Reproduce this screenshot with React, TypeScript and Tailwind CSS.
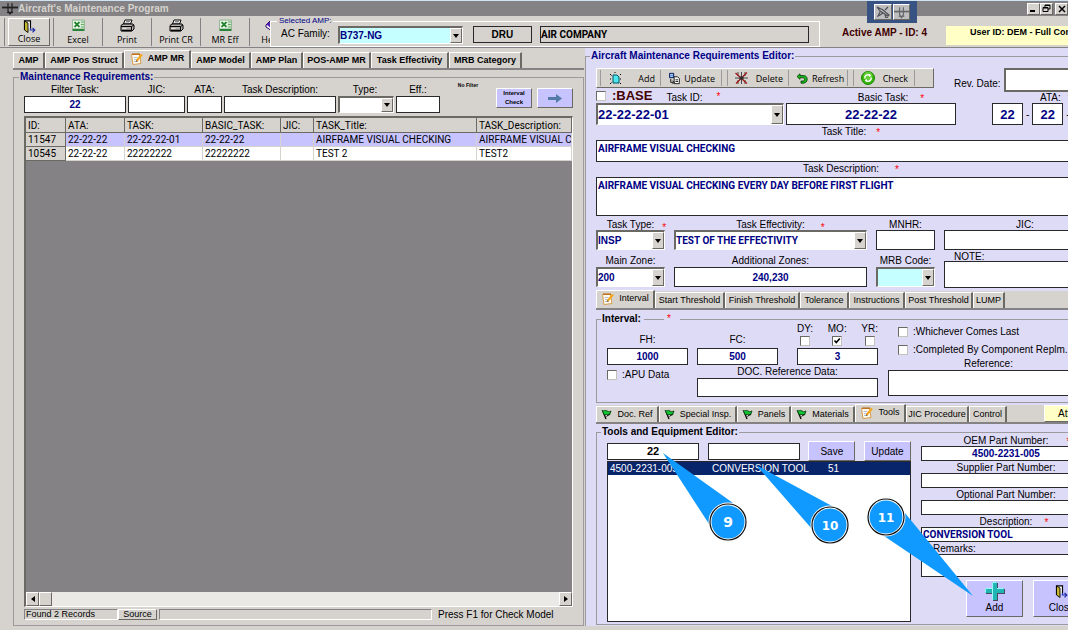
import { useState, type ReactNode } from 'react';
import clsx from 'clsx';

const raised = 'border border-t-white border-l-white border-b-[#6b6964] border-r-[#6b6964]';
const sunken = 'border border-t-[#848284] border-l-[#848284] border-b-white border-r-white';

/* ---------- Icons ---------- */

function DoorIcon() {
  return (
    <svg className="h-[13px] w-[13px]" viewBox="0 0 13 13">
      <path d="M1.500 10V.8h6V8" fill="#fff" stroke="#000" strokeWidth="1.200" />
      <path d="M1.500 1 5 3v9.500L1.500 10z" fill="#c6b531" stroke="#000" strokeWidth=".9" />
      <path d="M7.500 8v2H11M9.500 8l2.300 2-2.300 2.300" fill="none" stroke="#2131a5" strokeWidth="1.200" />
    </svg>
  );
}

function ExcelIcon() {
  return (
    <svg className="h-[13px] w-[13px]" viewBox="0 0 13 13">
      <path d="M.500 1h12v9H.500z" fill="#cfe8cf" stroke="#8cad8c" strokeWidth=".8" />
      <path d="M8.500 3H12M8.500 5.500H12M8.500 8H12" stroke="#6bad6b" />
      <path d="M1.500 2h7v7h-7z" fill="#fff" />
      <path d="M2.500 3l5 5M7.500 3l-5 5" stroke="#218429" strokeWidth="1.800" />
      <path d="M.500 10h12v2H.500z" fill="#29843a" />
    </svg>
  );
}

function PrinterIcon() {
  return (
    <svg className="h-[13px] w-[15px]" viewBox="0 0 15 13">
      <path d="M5 1h7l-1.500 4h-7z" fill="#fff" stroke="#000" />
      <path d="M6 2.500h4M5.500 4h4" stroke="#555" strokeWidth=".7" />
      <path d="M1 6.500 3 5h10l1 1.500V10l-2 2H1z" fill="#b5b2ad" stroke="#000" />
      <path d="M1 7.500h10.500v4M11.500 7.500 14 6" fill="none" stroke="#000" />
      <path d="M2.500 9.500h4" stroke="#e7e3de" />
      <path d="M2 11.500h9.500" stroke="#000" strokeWidth="1.500" />
    </svg>
  );
}

function BookIcon() {
  return (
    <svg className="h-[13px] w-[13px]" viewBox="0 0 13 13">
      <path d="M1 6 6 1l6 4-5 6z" fill="#5a21b5" stroke="#210063" />
      <path d="M1 6v2l6 4 5-6" fill="#fff" stroke="#210063" />
      <path d="M1.500 5.500 6 1.500l3 2-4 5z" fill="#5a21b5" />
      <path d="M5 4h2v2" stroke="#ffe000" fill="none" />
    </svg>
  );
}

function NoteIcon() {
  return (
    <svg className="h-[13px] w-[13px] flex-none" viewBox="0 0 13 13">
      <path d="M1.500 2.500h8l1.500 9-8 1z" fill="#fffaf0" stroke="#d69c4a" />
      <path d="M2 2.200h8" stroke="#bd7321" strokeWidth="1.600" />
      <path d="M3.500 5.500h4M4 7.500h3M4 9.500h4" stroke="#94a5c6" strokeWidth=".7" />
      <path d="M12 2.500 6.500 9" stroke="#f7a518" strokeWidth="2" />
      <path d="M6.800 8.200 5.500 10l2-.8z" fill="#424242" />
    </svg>
  );
}

function FlagIcon() {
  return (
    <svg className="h-[11px] w-[11px] flex-none" viewBox="0 0 11 11">
      <path d="M2 2.500 5 10" stroke="#000" strokeWidth="1.300" />
      <path d="M1 1.500c2 1 3-1 5 .5s3 0 4 0L8.500 6C7 6.500 6 4.500 3.500 6z" fill="#10c631" stroke="#003108" strokeWidth=".8" />
      <path d="M5.500 7.500 8.500 5" stroke="#000" />
    </svg>
  );
}

function NewIcon() {
  return (
    <svg className="h-[13px] w-[13px]" viewBox="0 0 13 13">
      <path d="M4 3h4l2 2v6H4z" fill="#4ae7ef" stroke="#005263" />
      <path d="M1 2l1.500 1.500M1 12l1.500-1.500M12 2l-1 1M12 12l-1-1M1 7h1M12 7h-1M6 1V0" stroke="#000" />
    </svg>
  );
}

function UpdateIcon() {
  return (
    <svg className="h-[13px] w-[13px]" viewBox="0 0 13 13">
      <path d="M.500.500h5v5h-5z" fill="#4284d6" stroke="#001052" />
      <path d="M1.500 2h3M1.500 4h3" stroke="#fff" strokeWidth=".8" />
      <path d="M6 4.500h4l2 2v6H6z" fill="#fff" stroke="#000" />
      <path d="M7.500 8h3M7.500 10h3M2 7v4h3M4 9l2 2-2 2" fill="none" stroke="#000" />
    </svg>
  );
}

function DeleteIcon() {
  return (
    <svg className="h-[14px] w-[15px]" viewBox="0 0 15 14">
      <path d="M7.500 1v12M4 1v4M11 1v4M4 9v4M11 9v4M1 7h13" stroke="#39393c" strokeWidth=".9" />
      <path d="M1.500 2 13 12.500M13 1.500 2 12.500" stroke="#a51818" strokeWidth="1.300" />
      <path d="M5.500 5.500h4v3h-4z" fill="#303030" />
    </svg>
  );
}

function RefreshIcon() {
  return (
    <svg className="h-[11px] w-[12px]" viewBox="0 0 12 11">
      <path d="M1 3.500 4 .8v1.700h3.500c5 0 5 7.700-.5 7.700H5V8h2c2 0 2-3.200 0-3.200H4v1.500z" fill="#18b518" stroke="#003900" strokeWidth=".8" />
    </svg>
  );
}

function CheckIcon() {
  return (
    <svg className="h-[14px] w-[14px]" viewBox="0 0 14 14">
      <circle cx="7" cy="7" r="6.500" fill="#39b510" stroke="#188400" />
      <circle cx="7" cy="5" r="4.500" fill="#84de52" opacity=".6" />
      <path d="M3.800 7.500a3.200 3.200 0 0 1 5.200-3M10.200 6.500a3.200 3.200 0 0 1-5.200 3" fill="none" stroke="#fff" strokeWidth="1.400" />
      <path d="M8 2.800l2.300 2L8 6zM6 11.200l-2.300-2L6 8z" fill="#fff" />
    </svg>
  );
}

function PlusIcon() {
  return (
    <svg className="h-[20px] w-[20px]" viewBox="0 0 20 20">
      <path d="M8 2h5v6h7v5h-7v7H8v-7H1V8h7z" fill="#4a4a5a" />
      <path d="M7 1h5v6h7v5h-7v7H7v-7H0V7h7z" fill="#21b5b5" />
      <path d="M7.500 19V1.500h4M.500 11.500v-4h7M12 7.500h6.500" fill="none" stroke="#9cf7f7" />
    </svg>
  );
}

function PlaneIcon({ className }: { className?: string }) {
  return (
    <svg className={className} viewBox="0 0 16 13" fill="none" stroke="currentColor">
      <path d="M6 1v8l2 3 2-3V1" strokeWidth="1.200" />
      <path d="M0 5.500h16" strokeWidth="1.800" />
      <path d="M5 10.500h6" strokeWidth="1.200" />
    </svg>
  );
}

/* ---------- Controls ---------- */

function Star({ className = 'ml-2' }: { className?: string }) {
  return <span className={clsx('absolute left-full top-0 text-[#ff0000]', className)}>*</span>;
}

interface FieldProps {
  label: string;
  star?: string;
  value?: string;
  className?: string;
  labelClass?: string;
  inputClass?: string;
  multiline?: boolean;
}

function Field({ label, star, value = '', className, labelClass = 'h-[13px] text-center', inputClass, multiline }: FieldProps) {
  const box = clsx('w-full min-w-0 resize-none border border-[#29292c] bg-white px-px font-bold text-[#000084] outline-none', inputClass);
  return (
    <label className={clsx('flex min-w-0 flex-col', className)}>
      <span className={clsx('whitespace-nowrap leading-[13px]', labelClass)}>
        <span className="relative">
          {label}
          {star && <Star className={star} />}
        </span>
      </span>
      {multiline ? <textarea className={box} defaultValue={value} /> : <input className={box} defaultValue={value} />}
    </label>
  );
}

interface ComboProps {
  value?: string;
  className?: string;
  label: string;
}

function Combo({ value = '', className, label }: ComboProps) {
  return (
    <span className={clsx('relative block border-2 border-b border-r border-t-[#6b6964] border-l-[#6b6964] border-b-white border-r-white bg-white', className)}>
      <select aria-label={label} className="block h-full w-full appearance-none bg-transparent font-bold text-[#000084] outline-none">
        <option>{value}</option>
      </select>
      <span className={clsx('pointer-events-none absolute inset-y-0 right-0 flex w-3 items-center justify-center bg-[#d6d3ce]', raised)}>
        <svg className="h-[4px] w-[6px]" viewBox="0 0 6 4">
          <path d="M0 0h6L3 4z" />
        </svg>
      </span>
    </span>
  );
}

function CheckBox({ label, checked = false, hideLabel = false }: { label: string; checked?: boolean; hideLabel?: boolean }) {
  const [on, setOn] = useState(checked);
  return (
    <label className="flex items-center gap-[5px] whitespace-nowrap">
      <span className="relative block h-[10px] w-[10px]">
        <input
          type="checkbox"
          aria-label={label}
          checked={on}
          onChange={() => setOn(!on)}
          className="block h-[10px] w-[10px] appearance-none border border-t-[#6b6964] border-l-[#6b6964] border-b-[#c6c3bd] border-r-[#c6c3bd] bg-white"
        />
        {on && (
          <svg className="pointer-events-none absolute inset-0" viewBox="0 0 10 10">
            <path d="M2.500 4.500 4.300 6.500l3.500-4" fill="none" stroke="#000" strokeWidth="1.600" />
          </svg>
        )}
      </span>
      {!hideLabel && <span>{label}</span>}
    </label>
  );
}

interface TabItem {
  label: string;
  icon?: ReactNode;
  width: string;
}

function Tabs({ items, active, bold, children }: { items: TabItem[]; active: string; bold?: boolean; children?: ReactNode }) {
  const [current, setCurrent] = useState(active);
  return (
    <div className={clsx('flex h-[19px] items-end border-b-2 border-b-[#848284] bg-[#d6d3ce] text-[9px]', bold && 'font-bold')}>
      {items.map((tab) => (
        <button
          key={tab.label}
          onClick={() => setCurrent(tab.label)}
          className={clsx(
            'flex flex-none items-center justify-center gap-[5px] whitespace-nowrap border-t border-l border-r-2 border-t-white border-l-white border-r-[#6b6964] leading-[13px]',
            tab.width,
            current === tab.label ? 'h-[18px] pb-[3px]' : 'h-4'
          )}
        >
          {tab.icon}
          {tab.label}
        </button>
      ))}
      {children}
    </div>
  );
}

interface ToolButtonProps {
  icon: ReactNode;
  label: string;
  className?: string;
}

function ToolButton({ icon, label, className = 'w-[49px] border-l border-[#848284]' }: ToolButtonProps) {
  return (
    <button className={clsx('flex h-7 flex-none flex-col items-center justify-between pt-px font-["Open_Sans",sans-serif] text-[9px] leading-[12px]', className)}>
      {icon}
      {label}
    </button>
  );
}

/* ---------- Data ---------- */

const mainTabs: TabItem[] = [
  { label: 'AMP', width: 'w-[32px]' },
  { label: 'AMP Pos Struct', width: 'w-[79px]' },
  { label: 'AMP MR', width: 'w-[67px]', icon: <NoteIcon /> },
  { label: 'AMP Model', width: 'w-[60px]' },
  { label: 'AMP Plan', width: 'w-[52px]' },
  { label: 'POS-AMP MR', width: 'w-[68px]' },
  { label: 'Task Effectivity', width: 'w-[78px]' },
  { label: 'MRB Category', width: 'w-[73px]' },
];

const thresholdTabs: TabItem[] = [
  { label: 'Interval', width: 'w-[59px]', icon: <NoteIcon /> },
  { label: 'Start Threshold', width: 'w-[70px]' },
  { label: 'Finish Threshold', width: 'w-[75px]' },
  { label: 'Tolerance', width: 'w-[49px]' },
  { label: 'Instructions', width: 'w-[56px]' },
  { label: 'Post Threshold', width: 'w-[68px]' },
  { label: 'LUMP', width: 'w-[32px]' },
];

const resourceTabs: TabItem[] = [
  { label: 'Doc. Ref', width: 'w-[63px]', icon: <FlagIcon /> },
  { label: 'Special Insp.', width: 'w-[78px]', icon: <FlagIcon /> },
  { label: 'Panels', width: 'w-[54px]', icon: <FlagIcon /> },
  { label: 'Materials', width: 'w-[64px]', icon: <FlagIcon /> },
  { label: 'Tools', width: 'w-[51px]', icon: <NoteIcon /> },
  { label: 'JIC Procedure', width: 'w-[63px]' },
  { label: 'Control', width: 'w-[38px]' },
];

const columns = [
  { name: 'ID:', width: 'w-[40px]' },
  { name: 'ATA:', width: 'w-[59px]' },
  { name: 'TASK:', width: 'w-[78px]' },
  { name: 'BASIC_TASK:', width: 'w-[78px]' },
  { name: 'JIC:', width: 'w-[33px]' },
  { name: 'TASK_Title:', width: 'w-[163px]' },
  { name: 'TASK_Description:', width: '' },
];

const requirements = [
  ['11547', '22-22-22', '22-22-22-01', '22-22-22', '', 'AIRFRAME VISUAL CHECKING', 'AIRFRAME VISUAL CHECKING'],
  ['10545', '22-22-22', '22222222', '22222222', '', 'TEST 2', 'TEST2'],
];

const callouts = [
  { n: 9, x: 728, y: 522, wedge: '663,453 733,503 709,524' },
  { n: 10, x: 830, y: 525, wedge: '756,465 832,506 812,529' },
  { n: 11, x: 886, y: 517, wedge: '973,596 905,513 884,536' },
];

/* ---------- Sections ---------- */

function Header() {
  return (
    <header className="relative flex-none border-t border-[#cfe3f3]">
      <div className="flex h-[15px] items-center justify-between bg-[#848284] pl-[2px]">
        <h1 className="flex items-center text-[10px] font-bold leading-[14px] text-[#d6d3ce]">
          <PlaneIcon className="h-[13px] w-4 text-[#212121]" />
          Aircraft&apos;s Maintenance Program
        </h1>
        <div className="flex">
          <button aria-label="Minimize" className={clsx('flex h-3 w-[13px] items-end bg-[#d6d3ce] p-[2px]', raised)}>
            <span className="h-[2px] w-[5px] bg-black" />
          </button>
          <button aria-label="Restore" className={clsx('mr-[2px] flex h-3 w-[13px] items-center justify-center bg-[#d6d3ce]', raised)}>
            <svg className="h-[9px] w-[9px]" viewBox="0 0 9 9" fill="none" stroke="#000">
              <path d="M3 3V1h5v4H6M3 1.500h5M1 3.500h5v4H1zM1 4h5" />
            </svg>
          </button>
          <button aria-label="Close window" className={clsx('flex h-3 w-[13px] items-center justify-center bg-[#d6d3ce]', raised)}>
            <svg className="h-[8px] w-[8px]" viewBox="0 0 8 8" stroke="#000" strokeWidth="1.500">
              <path d="M1 1l6 6M7 1 1 7" />
            </svg>
          </button>
        </div>
      </div>
      <div className="flex h-8 border-b border-[#848284]">
        <nav className="flex w-[270px] flex-none items-center overflow-hidden pl-1">
          <span className="mr-[3px] h-7 w-px flex-none bg-[#848284]" />
          <ToolButton icon={<DoorIcon />} label="Close" className={clsx('mr-[3px] w-[42px]', raised)} />
          <ToolButton icon={<ExcelIcon />} label="Excel" />
          <ToolButton icon={<PrinterIcon />} label="Print" />
          <ToolButton icon={<PrinterIcon />} label="Print CR" />
          <ToolButton icon={<ExcelIcon />} label="MR Eff" />
          <ToolButton icon={<BookIcon />} label="Help" className="w-[43px] border-l border-[#848284]" />
        </nav>
        <fieldset className="flex h-[31px] w-[550px] flex-none items-start gap-2 border border-white px-[10px]">
          <legend className="-ml-1 px-[2px] text-[8px] leading-[10px] text-[#000084]">Selected AMP:</legend>
          <span className="pt-px">AC Family:</span>
          <Combo label="AC Family" value="B737-NG" className="h-[18px] w-[125px] bg-[#c6ffff]!" />
          <input aria-label="Family code" defaultValue="DRU" className="ml-[2px] h-[17px] w-[59px] border border-[#29292c] text-center text-[10px] font-bold" />
          <input aria-label="Company" defaultValue="AIR COMPANY" className="h-[17px] min-w-0 flex-1 border border-[#29292c] text-[10px] font-bold font-['Roboto',sans-serif]" />
        </fieldset>
        <p className="w-[126px] flex-none pl-[22px] pt-[10px] font-bold text-[#420000]">Active AMP - ID: 4</p>
        <p className="mt-[10px] h-[19px] flex-1 overflow-hidden whitespace-nowrap bg-[#ffffc6] pl-6 text-[9px] font-bold leading-[13px]">User ID: DEM - Full Control</p>
      </div>
      <div className="absolute left-[867px] top-0 flex h-[22px] w-[50px] gap-px bg-[#395284] px-[7px] py-[3px]">
        <button aria-label="Aircraft list" className={clsx('flex flex-1 items-center justify-center bg-[#bdbebd]', raised)}>
          <svg className="h-3 w-[14px]" viewBox="0 0 14 12" fill="none" stroke="#4a4a52" strokeWidth="1.100">
            <path d="M1 1l3 4 8 5 1-1-6-5zM9 4l3-3M4 6 2 10l2-1 3-2M9 9l1 3 2-1" />
          </svg>
        </button>
        <button aria-label="Aircraft" className={clsx('flex flex-1 items-center justify-center bg-[#bdbebd]', raised)}>
          <PlaneIcon className="h-[13px] w-[15px] text-[#63656b]" />
        </button>
      </div>
    </header>
  );
}

function RequirementsPanel() {
  return (
    <section className="flex w-[585px] flex-none flex-col pl-[13px] pr-px pt-[3px]">
      <Tabs items={mainTabs} active="AMP MR" bold />
      <fieldset className="mt-px flex min-w-0 flex-1 flex-col border border-[#9c9a9c] px-[10px] pb-[5px]">
        <legend className="ml-[-5px] px-px text-[10px] font-bold leading-[12px] text-[#000084]">Maintenance Requirements:</legend>
        <div className="flex h-[33px] flex-none items-start">
          <div className="flex gap-[2px]">
            <Field label="Filter Task:" value="22" className="w-[102px]" inputClass="h-[17px] text-center text-[10px]" />
            <Field label="JIC:" className="w-[57px]" inputClass="h-[17px]" />
            <Field label="ATA:" className="w-[35px]" inputClass="h-[17px]" />
            <Field label="Task Description:" className="w-[112px]" inputClass="h-[17px]" />
            <div className="w-[56px]">
              <span className="block pr-[2px] text-center leading-[13px]">Type:</span>
              <Combo label="Type" className="h-[17px]" />
            </div>
            <Field label="Eff.:" className="w-[44px]" inputClass="h-[17px]" />
          </div>
          <span className="w-[56px] text-center text-[5px] font-bold leading-none">No Filter</span>
          <div className="flex flex-1 justify-between pt-[5px]">
            <button className={clsx('h-5 w-9 overflow-hidden bg-[#c6c3ff] text-[6px] font-bold leading-[9px]', raised)}>Interval Check</button>
            <button aria-label="Next" className={clsx('flex h-5 w-9 items-center justify-center bg-[#c6c3ff]', raised)}>
              <svg className="h-[9px] w-[14px]" viewBox="0 0 14 9">
                <path d="M0 3h8V0l6 4.500L8 9V6H0z" fill="#527ba5" />
              </svg>
            </button>
          </div>
        </div>
        <div className="flex flex-1 flex-col border-2 border-b border-r border-t-[#6b6964] border-l-[#6b6964] border-b-white border-r-white bg-[#848284]">
          <table className="w-full table-fixed border-separate border-spacing-0 bg-white font-['Roboto',sans-serif] text-[10px] leading-[13px]">
            <thead>
              <tr>
                {columns.map((column) => (
                  <th
                    key={column.name}
                    className={clsx('h-[15px] overflow-hidden whitespace-nowrap border-b border-r border-[#6b6964] bg-[#d6d3ce] px-[2px] py-0 text-left font-normal', column.width)}
                  >
                    {column.name}
                  </th>
                ))}
              </tr>
            </thead>
            <tbody>
              {requirements.map((row, rowIndex) => (
                <tr key={row[0]} className={rowIndex === 0 ? 'bg-[#c6c3ff]' : 'bg-white'}>
                  {row.map((cell, index) => (
                    <td
                      key={index}
                      className={clsx(
                        'overflow-hidden whitespace-nowrap border-b border-r px-[2px] py-0',
                        index === 0 ? 'border-[#6b6964] bg-[#d6d3ce]' : 'border-[#d6d3ce]'
                      )}
                    >
                      {cell}
                    </td>
                  ))}
                </tr>
              ))}
            </tbody>
          </table>
          <div className="mt-auto flex h-[14px] bg-[#ebe9e6]">
            <button aria-label="Scroll left" className={clsx('flex w-[13px] items-center justify-center bg-[#d6d3ce]', raised)}>
              <svg className="h-[6px] w-[4px]" viewBox="0 0 4 6"><path d="M4 0v6L0 3z" /></svg>
            </button>
            <span className={clsx('w-[13px] bg-[#d6d3ce]', raised)} />
            <button aria-label="Scroll right" className={clsx('ml-auto flex w-[13px] items-center justify-center bg-[#d6d3ce]', raised)}>
              <svg className="h-[6px] w-[4px]" viewBox="0 0 4 6"><path d="M0 0v6l4-3z" /></svg>
            </button>
          </div>
        </div>
        <div className="mt-[2px] flex h-[11px] flex-none items-center text-[9px] leading-[9px]">
          <span className={clsx('h-full w-[94px] pl-px', sunken)}>Found 2 Records</span>
          <button className={clsx('h-full w-[39px]', raised)}>Source</button>
          <span className={clsx('ml-[2px] h-full w-[273px]', sunken)} />
          <span className="ml-[6px] text-[10px]">Press F1 for Check Model</span>
        </div>
      </fieldset>
    </section>
  );
}

function EditorToolbar() {
  const button = 'flex items-center justify-between gap-1 border-r border-[#9c9a9c] h-4';
  return (
    <div className="flex h-5 items-start">
      <div className={clsx('flex h-5 w-[338px] flex-none items-center bg-[#d6d3ce] pl-[3px] font-["Open_Sans",sans-serif] text-[9px]', raised)}>
        <button className={clsx(button, 'w-[61px] border-l pl-2 pr-[5px]')}><NewIcon />Add</button>
        <button className={clsx(button, 'w-[61px] pl-2 pr-[6px]')}><UpdateIcon />Update</button>
        <button className={clsx(button, 'ml-[5px] w-[62px] border-l pl-[6px] pr-[5px]')}><DeleteIcon />Delete</button>
        <button className={clsx(button, 'w-[59px] justify-start! pl-[7px]')}><RefreshIcon />Refresh</button>
        <button className={clsx(button, 'ml-[5px] w-[62px] border-l pl-[7px] pr-[6px]')}><CheckIcon />Check</button>
      </div>
      <label className="flex flex-1 items-center gap-[3px] whitespace-nowrap pl-[20px]">
        <span className="pt-[6px]">Rev. Date:</span>
        <input className="h-6 min-w-0 flex-1 border-2 border-[#6b6964] bg-white" />
      </label>
    </div>
  );
}

function IntervalGroup() {
  return (
    <fieldset className="mt-[3px] flex min-w-0 gap-[10px] border border-[#9c9a9c] pb-[5px] pl-[10px]">
      <legend className="-ml-[6px] flex items-center gap-[3px] px-px text-[10px] font-bold leading-[12px]">
        Interval:
        <span className="h-px w-5 bg-[#9c9a9c]" />
        <span className="pr-2 font-normal text-[#ff0000]">*</span>
      </legend>
      <div className="w-[271px] flex-none">
        <div className="flex h-10 items-end">
          <Field label="FH:" value="1000" className="w-[81px]" labelClass="h-[15px] text-center" inputClass="h-[17px] text-center text-[10px]" />
          <Field label="FC:" value="500" className="ml-[9px] w-[81px]" labelClass="h-[15px] text-center" inputClass="h-[17px] text-center text-[10px]" />
          <div className="ml-auto w-[81px]">
            <div className="flex justify-between pb-[2px] leading-[14px]">
              <span className="flex flex-col items-center">DY:<CheckBox label="DY" hideLabel /></span>
              <span className="flex flex-col items-center">MO:<CheckBox label="MO" hideLabel checked /></span>
              <span className="flex flex-col items-center">YR:<CheckBox label="YR" hideLabel /></span>
            </div>
            <input aria-label="Calendar interval" defaultValue="3" className="block h-[17px] w-full border border-[#29292c] bg-white text-center text-[10px] font-bold text-[#000084]" />
          </div>
        </div>
        <div className="flex">
          <div className="w-[90px] pt-[3px]"><CheckBox label=":APU Data" /></div>
          <Field label="DOC. Reference Data:" className="flex-1" inputClass="h-[19px]" />
        </div>
      </div>
      <div className="flex-1">
        <div className="flex flex-col gap-[4px] pl-[10px] leading-[14px]">
          <CheckBox label=":Whichever Comes Last" />
          <CheckBox label=":Completed By Component Replm." />
        </div>
        <Field multiline label="Reference:" labelClass="h-[13px] pl-[76px]" inputClass="h-[26px]" />
      </div>
    </fieldset>
  );
}

function ToolsGroup() {
  const action = clsx('h-5 w-[47px] bg-[#c6c3ff]', raised);
  return (
    <fieldset className="mt-[2px] flex min-w-0 flex-1 gap-[10px] border border-[#9c9a9c] pb-[2px] pl-[10px] pr-[14px]">
      <legend className="-ml-[6px] px-px text-[10px] font-bold leading-[12px]">Tools and Equipment Editor:</legend>
      <div className="flex w-[304px] flex-none flex-col pt-[3px]">
        <div className="flex items-center justify-between">
          <input aria-label="Filter part number" defaultValue="22" className="h-[17px] w-[92px] border border-[#29292c] bg-white text-center text-[11px] font-bold" />
          <input aria-label="Filter description" className="h-[17px] w-[92px] border border-[#29292c] bg-white" />
          <button className={action}>Save</button>
          <button className={action}>Update</button>
        </div>
        <div className="min-h-[150px] flex-1 border border-[#29292c] bg-white">
          <div className="grid h-[13px] grid-cols-[102px_116px_1fr] bg-[#08246b] pl-[2px] leading-[13px] text-white">
            <span>4500-2231-005</span>
            <span>CONVERSION TOOL</span>
            <span>51</span>
          </div>
        </div>
      </div>
      <div className="-mt-1 flex-1">
        <Field label="OEM Part Number:" star="ml-[18px]" value="4500-2231-005" labelClass="h-3 text-center" inputClass="h-[15px] text-center text-[10px]" />
        <Field label="Supplier Part Number:" labelClass="h-3 text-center" inputClass="h-[15px]" />
        <Field label="Optional Part Number:" labelClass="h-3 text-center" inputClass="h-[15px]" />
        <Field label="Description:" star="ml-3" value="CONVERSION TOOL" labelClass="h-3 text-center" inputClass="h-[15px] font-['Roboto',sans-serif]" />
        <Field multiline label="Remarks:" labelClass="h-3 pl-3" inputClass="h-[23px]" />
        <div className="flex gap-[10px] pl-[45px] pt-[3px]">
          <button className={clsx('flex h-[37px] w-[57px] flex-col items-center justify-between bg-[#c6c3ff] pb-[2px]', raised)}><PlusIcon />Add</button>
          <button className={clsx('flex h-[37px] w-[57px] flex-col items-center justify-between bg-[#c6c3ff] pb-[2px] pt-[4px]', raised)}><DoorIcon />Close</button>
        </div>
      </div>
    </fieldset>
  );
}

function EditorPanel() {
  return (
    <section className="flex min-w-0 flex-1 overflow-hidden bg-[#dedbf7] pt-[2px]">
      <fieldset className="flex min-w-[530px] flex-1 flex-col border border-b-0 border-[#9c9a9c] pl-[10px] pr-2">
        <legend className="-ml-[6px] px-px text-[10px] font-bold leading-[12px] text-[#000084]">Aircraft Maintenance Requirements Editor:</legend>
        <div className="flex flex-1 flex-col pb-px pt-[6px]">
          <EditorToolbar />
          <div className="flex">
            <div className="w-[190px] flex-none">
              <div className="flex h-[15px] items-center">
                <CheckBox label="BASE" hideLabel />
                <span className="ml-[6px] text-[13px] font-bold leading-none text-[#420000]">:BASE</span>
                <span className="relative ml-[14px] pt-[4px]">Task ID:<Star className="ml-[14px] pt-[3px]" /></span>
              </div>
              <Combo label="Task ID" value="22-22-22-01" className="h-[22px] w-[188px] text-[13px]" />
            </div>
            <Field label="Basic Task:" star="ml-[12px]" value="22-22-22" className="w-[170px] flex-none" labelClass="h-[15px] pl-[24px] pt-[3px] text-center" inputClass="h-[22px] text-center text-[13px]" />
            <div className="ml-auto w-[114px] flex-none">
              <div className="h-[15px] pl-[48px] pt-[3px] leading-[13px]"><span className="relative">ATA:<Star className="ml-[7px]" /></span></div>
              <div className="flex items-center gap-[3px]">
                {['22', '22', '22'].map((part, index) => (
                  <span key={index} className="flex items-center gap-[3px]">
                    {index > 0 && <span>-</span>}
                    <input aria-label={`ATA part ${index + 1}`} defaultValue={part} className="h-[22px] w-[31px] border border-[#29292c] bg-white text-center text-[13px] font-bold text-[#000084]" />
                  </span>
                ))}
              </div>
            </div>
          </div>
          <Field label="Task Title:" star="ml-[10px]" value="AIRFRAME VISUAL CHECKING" labelClass="h-[15px] pr-[14px] text-center" inputClass="h-[22px] pb-[6px] font-['Roboto',sans-serif]" />
          <Field multiline label="Task Description:" star="ml-4" value="AIRFRAME VISUAL CHECKING EVERY DAY BEFORE FIRST FLIGHT" labelClass="h-[15px] pr-[20px] text-center" inputClass="h-[39px] pt-px font-['Roboto',sans-serif]" />
          <div className="grid grid-cols-[69px_193px_59px_1fr] gap-x-[9px]">
            <div>
              <span className="block h-[14px] text-center leading-[17px]"><span className="relative">Task Type:<Star /></span></span>
              <Combo label="Task Type" value="INSP" className="h-5" />
            </div>
            <div>
              <span className="block h-[14px] text-center leading-[17px]"><span className="relative">Task Effectivity:<Star className="ml-4" /></span></span>
              <Combo label="Task Effectivity" value="TEST OF THE EFFECTIVITY" className="h-5 font-['Roboto',sans-serif]" />
            </div>
            <Field label="MNHR:" labelClass="h-[14px] pt-[2px] text-center" inputClass="h-5" />
            <Field label="JIC:" labelClass="h-[14px] pt-[2px] text-center" inputClass="h-5" />
            <div className="pt-[4px]">
              <span className="block h-[13px] text-center leading-[13px]">Main Zone:</span>
              <Combo label="Main Zone" value="200" className="h-5" />
            </div>
            <Field label="Additional Zones:" value="240,230" className="pt-[4px]" labelClass="h-[13px] text-center" inputClass="h-5 text-center" />
            <div className="pt-[4px]">
              <span className="block h-[13px] whitespace-nowrap text-center leading-[13px]">MRB Code:</span>
              <Combo label="MRB Code" className="h-5 bg-[#c6ffff]!" />
            </div>
            <Field multiline label="NOTE:" labelClass="h-[11px] pl-[10px]" inputClass="h-[27px]" />
          </div>
          <div className="mt-[3px]">
            <Tabs items={thresholdTabs} active="Interval" />
          </div>
          <IntervalGroup />
          <div className="mt-[2px]">
            <Tabs items={resourceTabs} active="Tools">
              <button className={clsx('ml-auto h-[17px] w-[62px] bg-[#ffffc6] pl-[13px] text-left text-[10px]', raised)}>Attach</button>
            </Tabs>
          </div>
          <ToolsGroup />
        </div>
      </fieldset>
    </section>
  );
}

export default function App() {
  return (
    <div className="relative flex min-h-screen flex-col overflow-hidden bg-[#d6d3ce] pb-[4px] font-['Liberation_Sans',Arial,sans-serif] text-[10px] leading-[13px] text-black">
      <Header />
      <main className="flex flex-1">
        <RequirementsPanel />
        <EditorPanel />
      </main>

      {/* Numbered callouts */}
      <svg className="pointer-events-none absolute left-0 top-0 h-[630px] w-[1068px]" viewBox="0 0 1068 630">
        {callouts.map((callout) => (
          <g key={callout.n}>
            <polygon points={callout.wedge} fill="#109aff" />
            <circle cx={callout.x} cy={callout.y} r="18" fill="#109aff" stroke="#fff" strokeWidth="3" />
            <circle cx={callout.x} cy={callout.y} r="18" fill="none" stroke="#101010" strokeWidth="1.200" />
            <text x={callout.x} y={callout.y + 5} textAnchor="middle" fill="#fff" fontFamily="DejaVu Sans, sans-serif" fontWeight="bold" fontSize={callout.n === 9 ? 14 : 12}>
              {callout.n}
            </text>
          </g>
        ))}
      </svg>
    </div>
  );
}
